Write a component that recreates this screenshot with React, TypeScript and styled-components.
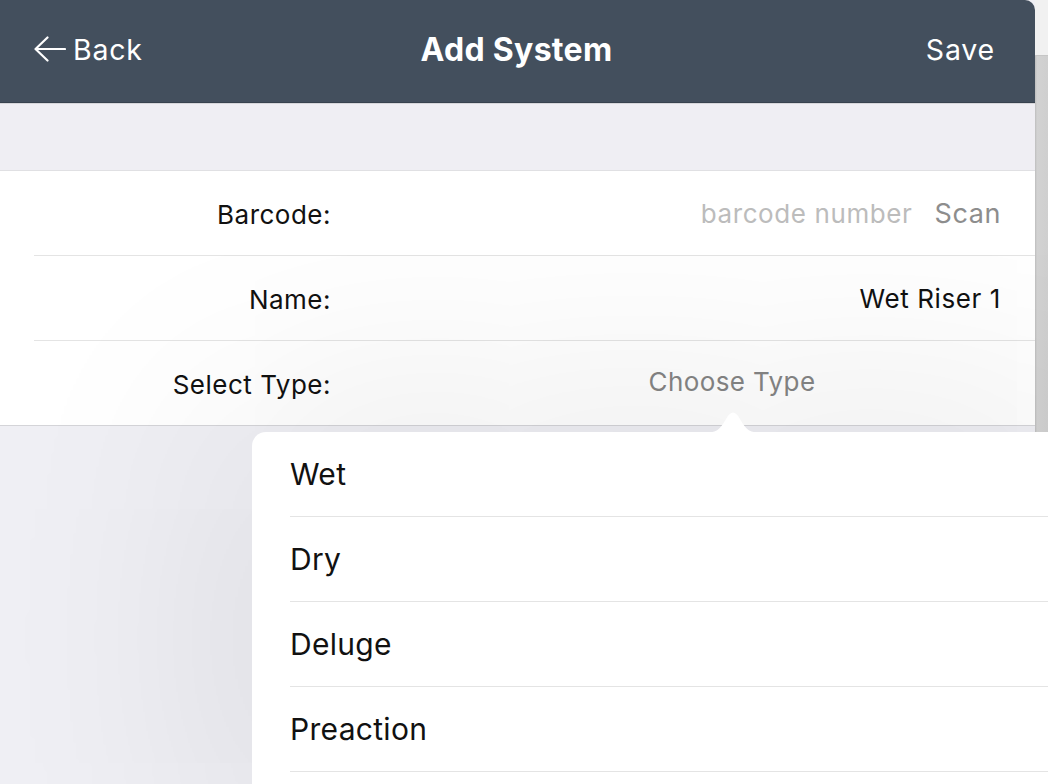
import styled, { createGlobalStyle } from 'styled-components'

const GlobalStyle = createGlobalStyle`
  html, body {
    margin: 0;
    padding: 0;
    background: #efeff4;
  }
  body {
    font-family: Inter, "Noto Sans", "Liberation Sans", sans-serif;
    -webkit-font-smoothing: antialiased;
  }
`

const TYPES = ['Wet', 'Dry', 'Deluge', 'Preaction']

export default function App() {
    return (
        <Page>
            <GlobalStyle />
            <Sheet>
                <NavBar>
                    <NavButton $align='left'>
                        <BackArrow />
                        Back
                    </NavButton>
                    <NavTitle>Add System</NavTitle>
                    <NavButton $align='right'>Save</NavButton>
                </NavBar>
                <SectionGap />
                <FormTable>
                    <FormRow>
                        <Label>Barcode:</Label>
                        <Value $justify='flex-end'>
                            <Placeholder>barcode number</Placeholder>
                            <ScanButton>Scan</ScanButton>
                        </Value>
                    </FormRow>
                    <FormRow>
                        <Label>Name:</Label>
                        <Value $justify='flex-end'>
                            <Text>Wet Riser 1</Text>
                        </Value>
                    </FormRow>
                    <FormRow $last>
                        <Label>Select Type:</Label>
                        <Value $justify='center'>
                            <Picker>Choose Type</Picker>
                        </Value>
                    </FormRow>
                </FormTable>
            </Sheet>
            <SideStrip>
                <SideTop />
                <SideBody />
            </SideStrip>
            <Popover>
                <Arrow />
                {TYPES.map((t) => (
                    <Option key={t}>{t}</Option>
                ))}
            </Popover>
        </Page>
    )
}

function BackArrow() {
    return (
        <svg width='32' height='26' viewBox='0 0 32 26' fill='none'>
            <path d='M1.5 13H31M13.5 1.5L1.5 13l12 11.5' stroke='#fff' strokeWidth='2.2' strokeLinecap='round' strokeLinejoin='round' />
        </svg>
    )
}

function Arrow() {
    return (
        <ArrowSvg width='60' height='26' viewBox='0 0 60 26'>
            <path d='M0 26C13 26 17 23 23 12Q30 -1 37 12C43 23 47 26 60 26Z' fill='#fff' />
        </ArrowSvg>
    )
}

const Page = styled.div`
    position: relative;
    display: flex;
    width: 1048px;
    height: 784px;
    overflow: hidden;
    background: #efeff4;
`

const Sheet = styled.div`
    width: 1035px;
    flex-shrink: 0;
    display: flex;
    flex-direction: column;
    background: #efeff4;
    border-top-right-radius: 10px;
    overflow: hidden;
`

const NavBar = styled.div`
    height: 103px;
    display: grid;
    grid-template-columns: 1fr auto 1fr;
    align-items: center;
    padding: 0 40px 4px 34px;
    box-sizing: border-box;
    background: #434f5d;
    border-bottom: 1px solid #38424e;
    color: #fff;
`

const NavButton = styled.div<{ $align: 'left' | 'right' }>`
    display: flex;
    align-items: center;
    gap: 7px;
    justify-content: ${(p) => (p.$align === 'left' ? 'flex-start' : 'flex-end')};
    font-size: 28.5px;
    letter-spacing: 0.8px;
`

const NavTitle = styled.div`
    font-size: 32px;
    font-weight: 700;
    letter-spacing: 0.3px;
    padding-left: 4px;
`

const SectionGap = styled.div`
    height: 66px;
    background: #efeef3;
    border-top: 1px solid #d6d6da;
    border-bottom: 1px solid #e0e0e3;
`

const FormTable = styled.div`
    background: #fff;
    border-bottom: 1px solid #d4d4d8;
`

const FormRow = styled.div<{ $last?: boolean }>`
    height: 84px;
    margin-left: 34px;
    padding-right: 34px;
    display: grid;
    grid-template-columns: 297px 1fr;
    align-items: center;
    border-bottom: ${(p) => (p.$last ? 'none' : '1px solid #e4e4e4')};
`

const Label = styled.div`
    text-align: right;
    font-size: 26px;
    letter-spacing: 0.5px;
    color: #111;
    padding-top: 3px;
`

const Value = styled.div<{ $justify: string }>`
    display: flex;
    align-items: center;
    justify-content: ${(p) => p.$justify};
    gap: 22px;
    padding-left: 132px;
    font-size: 26px;
    letter-spacing: 0.6px;
`

const Text = styled.span`
    color: #111;
`

const Placeholder = styled.span`
    color: #bcbcbc;
`

const ScanButton = styled.span`
    color: #8d8d8d;
    font-size: 27px;
`

const Picker = styled.span`
    color: #858585;
    letter-spacing: 0.4px;
    margin-bottom: 4px;
`

const SideStrip = styled.div`
    flex: 1;
    display: flex;
    flex-direction: column;
`

const SideTop = styled.div`
    height: 55px;
    background: #f1f1f1;
    border-bottom: 1px solid #c6c6c6;
`

const SideBody = styled.div`
    flex: 1;
    background: linear-gradient(90deg, #bdbdbd 0px, #d2d2d2 2px, #cfcfcf 100%);
`

const Popover = styled.div`
    position: absolute;
    left: 252px;
    top: 432px;
    right: -40px;
    bottom: -60px;
    background: #fff;
    border-radius: 14px;
    padding-left: 38px;
    box-shadow: 0 0 240px 20px rgba(0, 0, 0, 0.1);
`

const ArrowSvg = styled.svg`
    position: absolute;
    left: 451px;
    top: -25px;
`

const Option = styled.div`
    height: 84px;
    display: flex;
    align-items: center;
    font-size: 30px;
    letter-spacing: 0.3px;
    color: #111;
    border-bottom: 1px solid #e4e4e4;
`
